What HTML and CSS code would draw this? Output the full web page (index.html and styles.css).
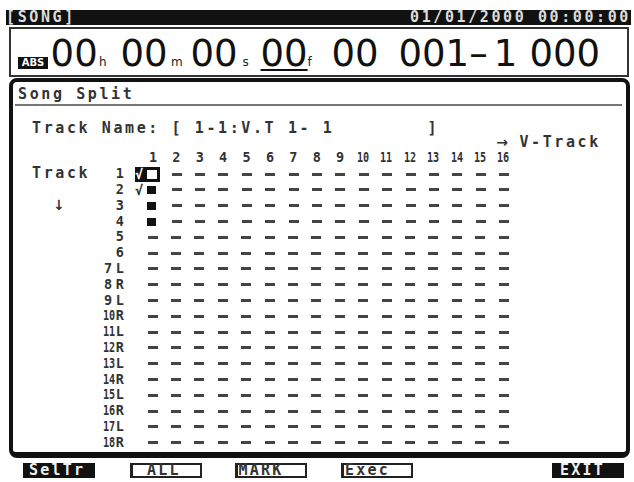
FILE: index.html
```html
<!DOCTYPE html>
<html>
<head>
<meta charset="utf-8">
<link rel="stylesheet" href="styles.css">
</head>
<body>
<div class="screen">
  <div class="topbar"><span>[SONG]</span><span>01/01/2000 00:00:00</span></div>

  <div class="timebox">
    <span class="abs">ABS</span>
    <span class="big t1">00</span><span class="unit t2">h</span>
    <span class="big t3">00</span><span class="unit t4">m</span>
    <span class="big t5">00</span><span class="unit t6">s</span>
    <span class="big t7 ul">00</span><span class="unit t8">f</span>
    <span class="big t9">00</span>
    <span class="big t10">001<span class="dash">–</span>1</span>
    <span class="big">000</span>
  </div>

  <div class="panel">
    <div class="title">Song Split</div>
    <div class="trackname">Track Name: [ 1-1:V.T 1- 1        ]</div>

    <div class="grid">
      <div class="vt"><span class="arr">→</span> V-Track</div>

      <div class="hn first">1</div><div class="hn">2</div><div class="hn">3</div><div class="hn">4</div>
      <div class="hn">5</div><div class="hn">6</div><div class="hn">7</div><div class="hn">8</div>
      <div class="hn">9</div><div class="hn"><span class="n2">10</span></div><div class="hn"><span class="n2">11</span></div><div class="hn"><span class="n2">12</span></div>
      <div class="hn"><span class="n2">13</span></div><div class="hn"><span class="n2">14</span></div><div class="hn"><span class="n2">15</span></div><div class="hn"><span class="n2">16</span></div>

      <div class="ca">Track</div><div class="lb">1</div>
      <div class="mk curcell"><span class="cur"><span class="chk">√</span><span class="sq"></span></span></div>
      <div class="ds part"></div>

      <div class="lb">2</div>
      <div class="mk"><span class="chk">√</span><span class="sq"></span></div>
      <div class="ds part"></div>

      <div class="ca arrow"><span class="arr">↓</span></div><div class="lb">3</div>
      <div class="mk"><span class="sq"></span></div>
      <div class="ds part"></div>

      <div class="lb">4</div>
      <div class="mk"><span class="sq"></span></div>
      <div class="ds part"></div>

      <div class="lb">5</div><div class="ds"></div>
      <div class="lb">6</div><div class="ds"></div>
      <div class="lb">7L</div><div class="ds"></div>
      <div class="lb">8R</div><div class="ds"></div>
      <div class="lb">9L</div><div class="ds"></div>
      <div class="lb"><span class="n2">10</span>R</div><div class="ds"></div>
      <div class="lb"><span class="n2">11</span>L</div><div class="ds"></div>
      <div class="lb"><span class="n2">12</span>R</div><div class="ds"></div>
      <div class="lb"><span class="n2">13</span>L</div><div class="ds"></div>
      <div class="lb"><span class="n2">14</span>R</div><div class="ds"></div>
      <div class="lb"><span class="n2">15</span>L</div><div class="ds"></div>
      <div class="lb"><span class="n2">16</span>R</div><div class="ds"></div>
      <div class="lb"><span class="n2">17</span>L</div><div class="ds"></div>
      <div class="lb"><span class="n2">18</span>R</div><div class="ds"></div>
    </div>
  </div>

  <div class="fkeys">
    <div class="key inv k1">SelTr</div>
    <div class="key box k2">ALL</div>
    <div class="key box k3">MARK</div>
    <div class="key box k4">Exec</div>
    <div class="key inv k6">EXIT</div>
  </div>
</div>
</body>
</html>
```

FILE: styles.css
```css
* { box-sizing: border-box; }
html, body { margin: 0; padding: 0; background: #fff; }
body {
  font-family: "DejaVu Sans Mono", "Liberation Mono", monospace;
  font-size: 15px;
  font-weight: bold;
  color: #333;
}
.screen { width: 634px; height: 482px; padding-top: 10px; overflow: hidden; }

/* top status bar */
.topbar {
  margin-left: 6px;
  width: 625px;
  height: 15px;
  background: #111;
  color: #ddd;
  display: flex;
  justify-content: space-between;
  letter-spacing: 2.6px;
  line-height: 15px;
}

/* time display */
.timebox {
  margin: 2px 0 0 9px;
  width: 620px;
  height: 50px;
  border: 2px solid #333;
  display: flex;
  align-items: baseline;
  padding: 5.2px 0 0 7px;
}
.abs {
  width: 30px;
  margin-right: 2.6px;
  background: #111;
  color: #fff;
  font: bold 10px/12px "DejaVu Sans", sans-serif;
  text-align: center;
}
.big {
  font-family: "DejaVu Sans", sans-serif;
  font-size: 37px;
  font-weight: normal;
  line-height: 40px;
  color: #111;
  white-space: pre;
}
.unit {
  font-family: "DejaVu Sans", sans-serif;
  font-size: 12px;
  font-weight: normal;
  color: #222;
}
.t1 { width: 48.4px; }
.t2 { width: 21.6px; }
.t3 { width: 50.4px; }
.t4 { width: 19.6px; }
.t5 { width: 51.9px; }
.t6 { width: 18.1px; }
.t7 { width: 46.9px; }
.t8 { width: 24.1px; }
.t9 { width: 67px; }
.t10 { width: 131px; }
.ul {
  text-decoration: underline;
  text-decoration-thickness: 2px;
  text-underline-offset: 3px;
}
.dash { margin-right: 6px; }

/* main panel */
.panel {
  margin: 1px 0 0 9px;
  width: 621px;
  height: 380px;
  border: 4px solid #111;
  border-bottom-width: 6px;
  border-radius: 8px;
  padding-top: 2.8px;
}
.title {
  margin: 0 4px 0 2px;
  padding: 0 0 1.2px 3px;
  line-height: 18px;
  border-bottom: 2px solid #777;
  letter-spacing: 2.6px;
}
.trackname {
  margin: 12.8px 0 0 19px;
  line-height: 18px;
  white-space: pre;
  letter-spacing: 2.6px;
}

.grid {
  margin: -2px 0 0 19px;
  display: grid;
  grid-template-columns: 60px 49.3px repeat(16, 23.4px) 1fr;
  grid-template-rows: 14px 17.5px repeat(18, 15.8px);
  letter-spacing: 2.6px;
  line-height: 15.8px;
}
.vt {
  grid-column: 18 / 20;
  line-height: 14px;
  padding-left: 4px;
  white-space: pre;
}
.arr {
  display: inline-block;
  width: 11.6px;
  font-family: "DejaVu Sans", sans-serif;
  font-size: 14px;
  letter-spacing: 0;
  text-align: center;
}
.hn {
  font-size: 13.5px;
  text-align: center;
  letter-spacing: 0;
  line-height: 17.5px;
}
.hn.first { grid-column: 3; }
.n2 {
  display: inline-block;
  width: 13px;
  letter-spacing: 0;
  white-space: nowrap;
  transform: scaleX(.75);
  transform-origin: 0 50%;
}
.ca { grid-column: 1; white-space: pre; }
.ca.arrow { padding-left: 21px; }
.lb {
  grid-column: 2;
  font-size: 13.5px;
  letter-spacing: 3.5px;
  text-align: right;
  padding-right: 14px;
  white-space: pre;
}
.mk {
  grid-column: 3;
  display: flex;
  justify-content: flex-end;
  align-items: center;
  padding-right: 8.7px;
  letter-spacing: 0;
}
.mk.curcell { padding-right: 4.7px; }
.chk {
  flex-shrink: 0;
  width: 9px;
  margin-right: 3px;
  font-size: 13.5px;
  line-height: 12px;
}
.sq {
  flex-shrink: 0;
  width: 9px;
  height: 8px;
  background: #111;
}
.cur {
  flex-shrink: 0;
  display: flex;
  align-items: center;
  height: 15px;
  padding-right: 3px;
  background: #111;
}
.cur .chk { color: #fff; }
.cur .sq { width: 10px; height: 9px; background: #fff; }

.ds {
  grid-column: 3 / 19;
  background: repeating-linear-gradient(90deg, transparent 0 6.7px, #444 6.7px 16.7px, transparent 16.7px 23.4px) 0 50% / 100% 3px no-repeat;
}
.ds.part { grid-column: 4 / 19; }

/* function keys */
.fkeys {
  margin: 5px 0 0 23px;
  display: grid;
  grid-template-columns: repeat(6, 105.8px);
}
.key {
  width: 72px;
  height: 15px;
  line-height: 15px;
  letter-spacing: 2.2px;
  white-space: pre;
}
.key.inv { background: #111; color: #eee; }
.key.box {
  border: 2px solid #222;
  border-left-width: 3px;
  line-height: 11px;
  color: #333;
}
.k1 { padding-left: 6px; }
.k2 { margin-left: 1.2px; padding-left: 14px; }
.k3 { padding-left: 1px; }
.k4 { margin-left: 0.6px; padding-left: 1px; }
.k6 { grid-column: 6; padding-left: 8px; }
```
